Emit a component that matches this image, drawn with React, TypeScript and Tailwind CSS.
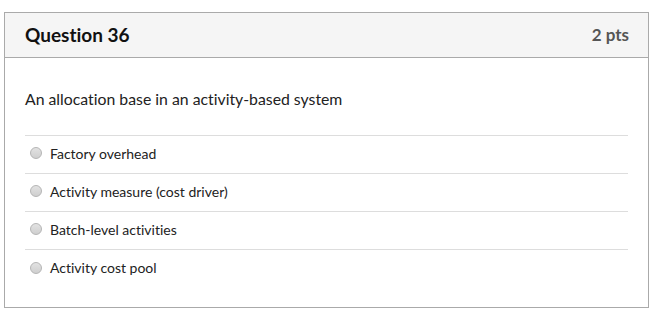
const answers = [
  "Factory overhead",
  "Activity measure (cost driver)",
  "Batch-level activities",
  "Activity cost pool",
];

export default function App() {
  return (
    <div className="h-[317px] w-[656px] bg-white pl-[4px] pt-[12px] font-['Lato','Liberation_Sans',sans-serif] [font-variant-ligatures:none] text-[#222222]">
      <div className="w-[645px] h-[296px] border border-[#aaaaaa] bg-white">
        <div className="flex h-[45px] items-center justify-between border-b border-[#aaaaaa] bg-[#f5f5f5] pl-[20px] pr-[19px]">
          <span className="text-[19px] font-bold text-[#111111]">Question 36</span>
          <span className="text-[17px] font-bold text-[#555555]">2 pts</span>
        </div>
        <div className="px-[20px] pt-[31px]">
          <p className="text-[15.8px] leading-[20px]">
            An allocation base in an activity-based system
          </p>
          <div className="mt-[26px] border-t border-[#dddddd]">
            {answers.map((a) => (
              <label
                key={a}
                className="flex h-[38px] items-center border-b border-[#dddddd] pb-[3px] pl-[5px] last:border-b-0"
              >
                <span className="mr-[8px] h-[12px] w-[12px] rounded-full border border-[#b5b5b5] bg-gradient-to-b from-[#e2e2e2] to-[#cfcfcf]" />
                <span className="text-[14px]">{a}</span>
              </label>
            ))}
          </div>
        </div>
      </div>
    </div>
  );
}
